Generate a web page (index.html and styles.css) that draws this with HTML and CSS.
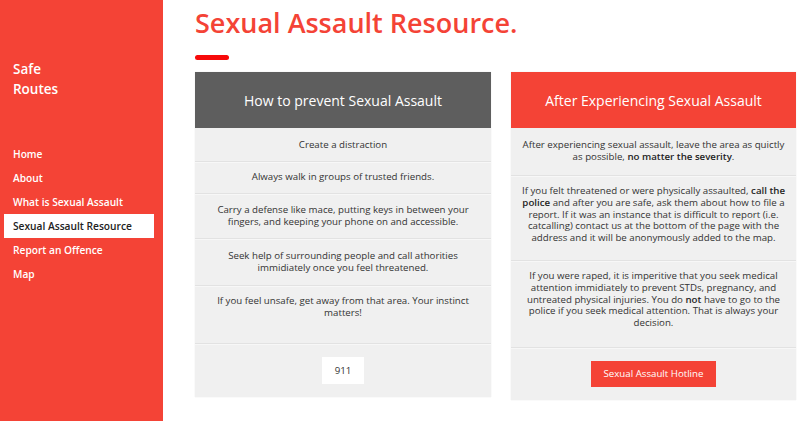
FILE: index.html
```html
<!DOCTYPE html>
<html lang="en">
<head>
<meta charset="utf-8">
<title>Sexual Assault Resource</title>
<link rel="stylesheet" href="styles.css">
</head>
<body>
<div class="page">
  <aside class="sidebar">
    <div class="brand"><span>Safe</span><span>Routes</span></div>
    <nav class="nav">
      <a class="nav-item" href="#">Home</a>
      <a class="nav-item" href="#">About</a>
      <a class="nav-item" href="#">What is Sexual Assault</a>
      <a class="nav-item active" href="#">Sexual Assault Resource</a>
      <a class="nav-item" href="#">Report an Offence</a>
      <a class="nav-item" href="#">Map</a>
    </nav>
  </aside>
  <main class="main">
    <h1 class="title">Sexual Assault Resource.</h1>
    <div class="title-bar"></div>
    <div class="cards">
      <section class="card card-left">
        <div class="card-head head-gray">How to prevent Sexual Assault</div>
        <div class="row l1">Create a distraction</div>
        <div class="row l2">Always walk in groups of trusted friends.</div>
        <div class="row l3">Carry a defense like mace, putting keys in between your fingers, and keeping your phone on and accessible.</div>
        <div class="row l4">Seek help of surrounding people and call athorities immidiately once you feel threatened.</div>
        <div class="row l5">If you feel unsafe, get away from that area. Your instinct matters!</div>
        <div class="row l6"><span class="btn btn-white">911</span></div>
      </section>
      <section class="card card-right">
        <div class="card-head head-red">After Experiencing Sexual Assault</div>
        <div class="row r1">After experiencing sexual assault, leave the area as quictly as possible, <b>no matter the severity</b>.</div>
        <div class="row r2">If you felt threatened or were physically assaulted, <b>call the police</b> and after you are safe, ask them about how to file a report. If it was an instance that is difficult to report (i.e. catcalling) contact us at the bottom of the page with the address and it will be anonymously added to the map.</div>
        <div class="row r3">If you were raped, it is imperitive that you seek medical attention immidiately to prevent STDs, pregnancy, and untreated physical injuries. You do <b>not</b> have to go to the police if you seek medical attention. That is always your decision.</div>
        <div class="row r4"><span class="btn btn-red">Sexual Assault Hotline</span></div>
      </section>
    </div>
  </main>
</div>
</body>
</html>
```
FILE: styles.css
```css
* { box-sizing: border-box; }
html, body { margin: 0; padding: 0; }
body {
  font-family: "Open Sans", "Liberation Sans", sans-serif;
  background: #ffffff;
  color: #333;
  width: 806px;
  height: 421px;
  overflow: hidden;
}
.page { display: flex; height: 421px; }

.sidebar {
  width: 163px;
  flex: 0 0 163px;
  background: #f44336;
  padding-top: 59px;
}
.brand {
  display: flex;
  flex-direction: column;
  padding-left: 13px;
  color: #fff;
  font-size: 13.5px;
  font-weight: 600;
  line-height: 20px;
}
.nav {
  display: flex;
  flex-direction: column;
  margin-top: 43px;
}
.nav-item {
  display: block;
  width: 150px;
  height: 24px;
  margin-left: 4px;
  padding-left: 9px;
  line-height: 24px;
  font-size: 10.2px;
  font-weight: 600;
  color: #fff;
  text-decoration: none;
  white-space: nowrap;
}
.nav-item.active { background: #fff; color: #222; }

.main {
  flex: 1;
  padding: 6px 0 0 32px;
}
.title {
  margin: 0;
  font-size: 27px;
  line-height: 34px;
  font-weight: 600;
  color: #f44336;
}
.title-bar {
  width: 34px;
  height: 5px;
  margin-top: 15px;
  border-radius: 3px;
  background: #f70a0a;
}
.cards {
  display: flex;
  align-items: flex-start;
  gap: 20px;
  margin-top: 12px;
}
.card {
  background: #f0f0f0;
  box-shadow: 0 0 1px rgba(0,0,0,0.12);
}
.card-left { width: 296px; }
.card-right { width: 285px; }
.card-head {
  height: 56px;
  display: flex;
  align-items: center;
  justify-content: center;
  color: #fff;
  font-size: 14px;
}
.head-gray { background: #5e5e5e; }
.head-red { background: #f44336; }

.row {
  text-align: center;
  font-size: 9.7px;
  line-height: 11.7px;
  color: #333;
  border-top: 1px solid #e2e2e2;
  box-shadow: inset 0 1px 0 #f7f7f7;
}
.row b { font-weight: 600; color: #1e1e1e; }
.card-left .row { padding-left: 20px; padding-right: 20px; }
.card-right .row { padding-left: 10px; padding-right: 10px; }

.l1 { border-top: 0; box-shadow: none; padding-top: 10.6px; padding-bottom: 10.6px; }
.l2 { padding-top: 9.6px; padding-bottom: 9.7px; }
.l3 { padding-top: 10.3px; padding-bottom: 10.3px; }
.l4 { padding-top: 11.3px; padding-bottom: 11.3px; }
.l5 { padding-top: 9px; padding-bottom: 24.6px; }
.l6 { padding-top: 13px; padding-bottom: 13px; display: flex; justify-content: center; }

.r1 { border-top: 0; box-shadow: none; padding-top: 11.2px; padding-bottom: 12.4px; }
.r2 { padding-top: 9.2px; padding-bottom: 16.3px; }
.r3 { padding-top: 9.2px; padding-bottom: 18.3px; }
.r4 { padding-top: 13px; padding-bottom: 12.5px; display: flex; justify-content: center; }

.btn {
  display: inline-flex;
  align-items: center;
  justify-content: center;
  height: 27px;
  padding: 0 12.5px;
  font-size: 9.7px;
}
.btn-white { background: #fff; color: #333; }
.btn-red { background: #f44336; color: #fff; height: 26.5px; padding: 0 13px; }
```
